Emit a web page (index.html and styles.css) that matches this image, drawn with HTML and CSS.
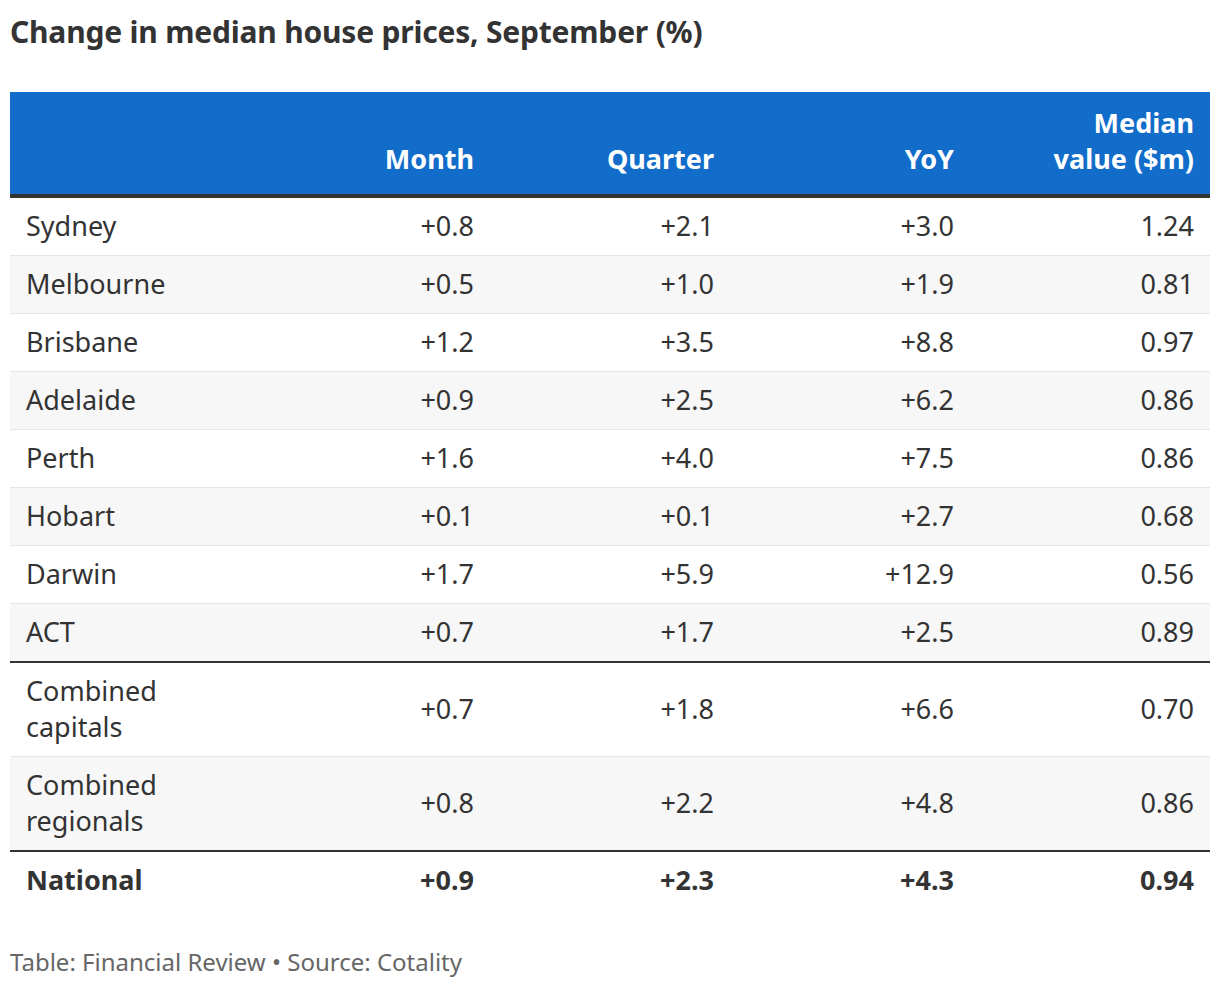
FILE: index.html
```html
<!DOCTYPE html>
<html>
<head>
<meta charset="utf-8">
<link rel="stylesheet" href="styles.css">
</head>
<body>
<div class="chart">
  <h1 class="title">Change in median house prices, September (%)</h1>
  <table class="data">
    <colgroup>
      <col class="c-name">
      <col class="c-num">
      <col class="c-num">
      <col class="c-num">
      <col class="c-num">
    </colgroup>
    <thead>
      <tr>
        <th class="name"></th>
        <th>Month</th>
        <th>Quarter</th>
        <th>YoY</th>
        <th>Median<br>value ($m)</th>
      </tr>
    </thead>
    <tbody>
      <tr><td class="name">Sydney</td><td>+0.8</td><td>+2.1</td><td>+3.0</td><td>1.24</td></tr>
      <tr><td class="name">Melbourne</td><td>+0.5</td><td>+1.0</td><td>+1.9</td><td>0.81</td></tr>
      <tr><td class="name">Brisbane</td><td>+1.2</td><td>+3.5</td><td>+8.8</td><td>0.97</td></tr>
      <tr><td class="name">Adelaide</td><td>+0.9</td><td>+2.5</td><td>+6.2</td><td>0.86</td></tr>
      <tr><td class="name">Perth</td><td>+1.6</td><td>+4.0</td><td>+7.5</td><td>0.86</td></tr>
      <tr><td class="name">Hobart</td><td>+0.1</td><td>+0.1</td><td>+2.7</td><td>0.68</td></tr>
      <tr><td class="name">Darwin</td><td>+1.7</td><td>+5.9</td><td>+12.9</td><td>0.56</td></tr>
      <tr class="sep"><td class="name">ACT</td><td>+0.7</td><td>+1.7</td><td>+2.5</td><td>0.89</td></tr>
      <tr><td class="name">Combined<br>capitals</td><td>+0.7</td><td>+1.8</td><td>+6.6</td><td>0.70</td></tr>
      <tr class="sep"><td class="name">Combined<br>regionals</td><td>+0.8</td><td>+2.2</td><td>+4.8</td><td>0.86</td></tr>
      <tr class="total"><td class="name">National</td><td>+0.9</td><td>+2.3</td><td>+4.3</td><td>0.94</td></tr>
    </tbody>
  </table>
  <p class="source">Table: Financial Review • Source: Cotality</p>
</div>
</body>
</html>
```
FILE: styles.css
```css
html, body {
  margin: 0;
  padding: 0;
  background: #ffffff;
}
body {
  font-family: "Noto Sans", "Open Sans", sans-serif;
  color: #333333;
}
.chart {
  padding: 0 10px;
}
.title {
  margin: 0;
  padding-top: 12px;
  font-size: 30px;
  line-height: 40px;
  font-weight: 700;
  color: #333333;
  height: 80px;
  letter-spacing: -0.2px;
}
.data {
  width: 1200px;
  border-collapse: collapse;
  table-layout: fixed;
  font-size: 27px;
}
.c-name {
  width: 240px;
}
.c-num {
  width: 240px;
}
.data th {
  background: #116dc9;
  color: #ffffff;
  font-weight: 700;
  text-align: right;
  vertical-align: bottom;
  line-height: 36px;
  padding: 13px 16px 17px 16px;
  border-bottom: 4px solid #333333;
}
.data td {
  text-align: right;
  line-height: 36px;
  padding: 10px 16px 11px 16px;
  border-bottom: 1px solid #e6e6e6;
  vertical-align: middle;
}
.data td.name {
  text-align: left;
}
.data tbody tr:nth-child(even) td {
  background: #f7f7f7;
}
.data tr.sep td {
  border-bottom: 2px solid #333333;
}
.data tr.total td {
  font-weight: 700;
  border-bottom: none;
}
.source {
  margin: 0;
  padding-top: 38px;
  font-size: 24px;
  line-height: 30px;
  color: #666666;
}
```
